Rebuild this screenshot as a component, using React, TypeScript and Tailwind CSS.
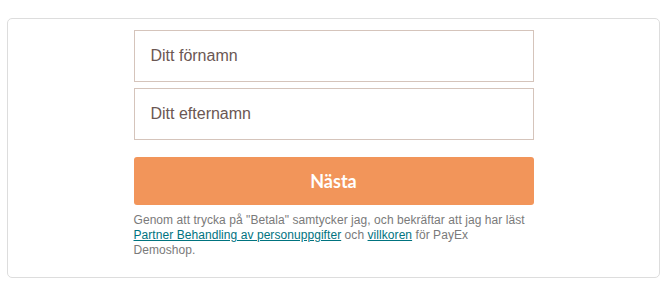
export default function App() {
  return (
    <div className="min-h-[286px] bg-white pt-[18px] px-[7px] font-['Liberation_Sans',Arial,sans-serif]">
      <div className="h-[260px] rounded-[5px] border border-[#dddddd] pt-[11px]">
        <form className="mx-auto flex w-[400px] flex-col" onSubmit={(e) => e.preventDefault()}>
          <input
            type="text"
            placeholder="Ditt förnamn"
            className="h-[52px] w-full border border-[#d5c4bb] bg-white px-4 text-[16px] text-[#6b5753] outline-none placeholder:text-[#6b5753]"
          />
          <input
            type="text"
            placeholder="Ditt efternamn"
            className="mt-[6px] h-[52px] w-full border border-[#d5c4bb] bg-white px-4 text-[16px] text-[#6b5753] outline-none placeholder:text-[#6b5753]"
          />
          <button
            type="submit"
            className="mt-[17px] h-[48px] w-full rounded-[3px] bg-[#f2955a] font-['Lato',sans-serif] text-[18px] font-bold text-white"
          >
            Nästa
          </button>
          <p className="mt-[8px] w-[394px] text-[12px] leading-[15px] tracking-[0.06px] text-[#7a7a7a]">
            Genom att trycka på "Betala" samtycker jag, och bekräftar att jag har läst{" "}
            <a href="#" className="text-[#00737f] underline">
              Partner Behandling av personuppgifter
            </a>{" "}
            och{" "}
            <a href="#" className="text-[#00737f] underline">
              villkoren
            </a>{" "}
            för PayEx Demoshop.
          </p>
        </form>
      </div>
    </div>
  )
}
